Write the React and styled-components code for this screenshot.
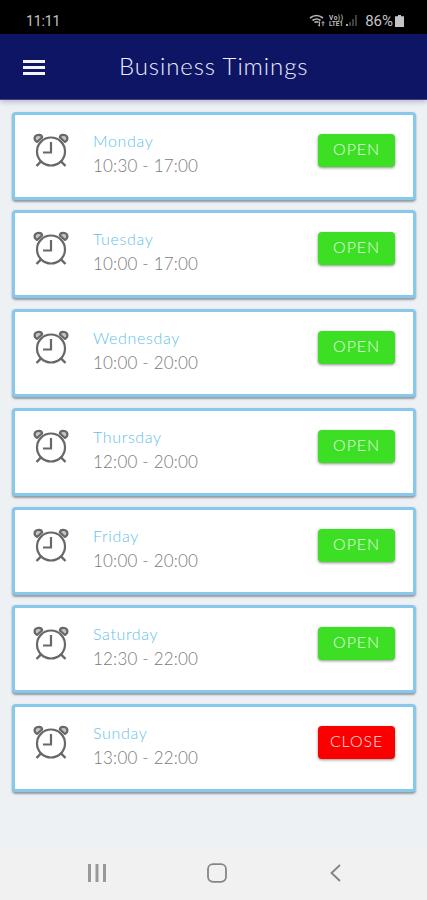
import React from "react"
import styled, { createGlobalStyle } from "styled-components"

const GlobalStyle = createGlobalStyle`
  * {
    box-sizing: border-box;
  }
  body {
    margin: 0;
    background-color: #edf1f4;
    font-family: Lato, "Open Sans", sans-serif;
  }
`

const Screen = styled.div`
  display: flex;
  flex-direction: column;
  width: 100%;
  height: 900px;
  overflow: hidden;
`

const StatusBar = styled.div`
  display: flex;
  flex-shrink: 0;
  justify-content: space-between;
  align-items: center;
  height: 34px;
  padding: 8px 23px 0 26px;
  background-color: #000;
  color: #c4c4c4;
  font-family: Roboto, sans-serif;
  font-size: 14px;
  line-height: 16px;
`

const Clock = styled.span`
  letter-spacing: -0.1px;
`

const StatusIcons = styled.div`
  display: flex;
  align-items: center;
`

const Battery = styled.span`
  margin: 0 2px 0 7px;
  font-size: 15px;
`

const Header = styled.header`
  display: flex;
  flex-shrink: 0;
  align-items: center;
  height: 66px;
  padding: 0 23px;
  background-color: #0f1565;
  border-bottom: 1px solid #41427c;
  box-shadow: 0 2px 5px rgba(70, 30, 110, 0.28);
`

const Title = styled.h1`
  flex: 1;
  margin: -1px 0 0 74px;
  color: #eceefa;
  font-size: 24px;
  font-weight: 300;
  line-height: 30px;
  letter-spacing: 0.9px;
  white-space: nowrap;
`

const List = styled.main`
  display: flex;
  flex: 1;
  flex-direction: column;
  gap: 10.75px;
  padding: 11.5px 11px 0 11.5px;
`

const Card = styled.section`
  display: flex;
  align-items: flex-start;
  height: 88px;
  padding: 18px 19px 0 18px;
  background-color: #fff;
  border: 3px solid #88c8ea;
  border-radius: 4px;
  box-shadow: 0 1.5px 2px rgba(60, 70, 90, 0.5);
`

const Timing = styled.div`
  flex: 1;
  margin: -4px 0 0 24.5px;
`

const Day = styled.div`
  color: #62bfeb;
  font-size: 16px;
  font-weight: 300;
  line-height: 24px;
  letter-spacing: 0.65px;
`

const Hours = styled.div`
  color: #7a7a7a;
  font-size: 17px;
  font-weight: 300;
  line-height: 25px;
  letter-spacing: 0.2px;
`

const StatusButton = styled.button`
  width: 77px;
  height: 33px;
  margin: 1px -1px 0 0;
  padding: 0 0 4px;
  background-color: ${props => (props.$open ? "#3ddf24" : "#fa0000")};
  border: none;
  border-radius: 4px;
  box-shadow: 0 1px 3px rgba(0, 0, 0, 0.45);
  color: ${props => (props.$open ? "#e8fce4" : "#ffe4e4")};
  font-family: inherit;
  font-size: 16px;
  font-weight: 300;
  letter-spacing: 0.9px;
`

const NavBar = styled.nav`
  display: flex;
  flex-shrink: 0;
  justify-content: space-between;
  align-items: center;
  height: 53px;
  padding: 0 81px 2px 87px;
  background-color: #f1f1f1;
`

const timings = [
  { day: "Monday", hours: "10:30 - 17:00", open: true },
  { day: "Tuesday", hours: "10:00 - 17:00", open: true },
  { day: "Wednesday", hours: "10:00 - 20:00", open: true },
  { day: "Thursday", hours: "12:00 - 20:00", open: true },
  { day: "Friday", hours: "10:00 - 20:00", open: true },
  { day: "Saturday", hours: "12:30 - 22:00", open: true },
  { day: "Sunday", hours: "13:00 - 22:00", open: false },
]

const AlarmIcon = () => (
  <svg width="36" height="34" viewBox="0 0 36 34" fill="none" stroke="#686868">
    <circle cx="18" cy="18.5" r="14" strokeWidth="2.2" />
    <path d="M18 9V19.5H10" strokeWidth="2.2" />
    <path d="M8 28.3L3.5 33M28 28.3L32.5 33" strokeWidth="2.4" />
    <path
      d="M4 9C0.4 7 1 2.6 4.6 2C7 1.6 8.9 2.7 9.2 4.4ZM32 9C35.6 7 35 2.6 31.4 2C29 1.6 27.1 2.7 26.8 4.4Z"
      fill="#c4c4c4"
      strokeWidth="2.2"
      strokeLinejoin="round"
    />
  </svg>
)

const SignalIcons = () => (
  <svg width="49" height="14" viewBox="0 0 49 14" fill="none">
    <g stroke="#b5b5b5" strokeWidth="1.7">
      <path d="M1 4Q7.5-1 14 4M3.5 6.5Q7.5 3.5 11.5 6.5M5.5 8.5Q7.5 7 9.5 8.5" />
      <path d="M10.5 7.5V12M8.8 10.5L10.5 12.2M14 12V7.8M12.5 9.2L14 7.5L15.5 9.2" strokeWidth="1" />
    </g>
    <g fill="#bdbdbd" fontFamily="Roboto" fontSize="6.5" fontWeight="700">
      <text x="20" y="6" textLength="14">Vo))</text>
      <text x="20" y="12.3" textLength="14">LTE1</text>
    </g>
    <path d="M37 10H39V12H37Z" fill="#aaa" />
    <path d="M40 8H42V12H40ZM43 5H45V12H43ZM46 1H48V12H46Z" fill="#3d3d3d" />
  </svg>
)

const App = () => (
  <>
    <GlobalStyle />
    <Screen>
      <StatusBar>
        <Clock>11:11</Clock>
        <StatusIcons>
          <SignalIcons />
          <Battery>86%</Battery>
          <svg width="9" height="12" viewBox="0 0 9 12">
            <path d="M3 0H6V1.3H9V12H0V1.3H3Z" fill="#c4c4c4" />
          </svg>
        </StatusIcons>
      </StatusBar>
      <Header>
        <svg width="22" height="16" viewBox="0 0 22 16">
          <path d="M0 1H22V4H0ZM0 7H22V10H0ZM0 13H22V16H0Z" fill="#f3f4fc" />
        </svg>
        <Title>Business Timings</Title>
      </Header>
      <List>
        {timings.map(item => (
          <Card key={item.day}>
            <AlarmIcon />
            <Timing>
              <Day>{item.day}</Day>
              <Hours>{item.hours}</Hours>
            </Timing>
            <StatusButton $open={item.open}>
              {item.open ? "OPEN" : "CLOSE"}
            </StatusButton>
          </Card>
        ))}
      </List>
      <NavBar>
        <svg width="20" height="20" viewBox="0 0 20 20">
          <path d="M2.5 1V19M10 1V19M17.5 1V19" stroke="#999" strokeWidth="3" />
        </svg>
        <svg width="20" height="20" viewBox="0 0 20 20">
          <rect x="1" y="1.2" width="18" height="17.6" rx="5" fill="none" stroke="#858585" strokeWidth="1.8" />
        </svg>
        <svg width="20" height="20" viewBox="0 0 20 20">
          <path d="M14 2L5.5 10L14 18" fill="none" stroke="#858585" strokeWidth="1.9" />
        </svg>
      </NavBar>
    </Screen>
  </>
)

export default App
